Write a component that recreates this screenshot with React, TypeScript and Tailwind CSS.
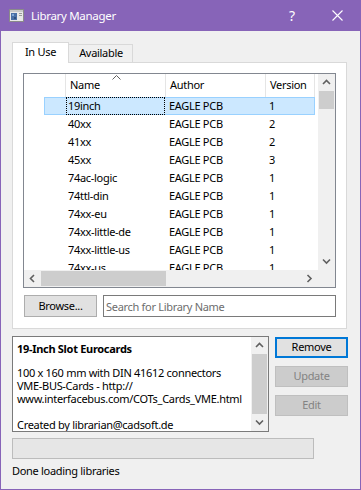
import { useState } from "react";

interface LibraryRow {
  name: string;
  author: string;
  version: string;
}

const rows: LibraryRow[] = [
  { name: "19inch", author: "EAGLE PCB", version: "1" },
  { name: "40xx", author: "EAGLE PCB", version: "2" },
  { name: "41xx", author: "EAGLE PCB", version: "2" },
  { name: "45xx", author: "EAGLE PCB", version: "3" },
  { name: "74ac-logic", author: "EAGLE PCB", version: "1" },
  { name: "74ttl-din", author: "EAGLE PCB", version: "1" },
  { name: "74xx-eu", author: "EAGLE PCB", version: "1" },
  { name: "74xx-little-de", author: "EAGLE PCB", version: "1" },
  { name: "74xx-little-us", author: "EAGLE PCB", version: "1" },
  { name: "74xx-us", author: "EAGLE PCB", version: "1" },
];

function Chevron({ dir }: { dir: "up" | "down" | "left" | "right" }) {
  const d = {
    up: "M1 5 L4.5 1.5 L8 5",
    down: "M1 1.5 L4.5 5 L8 1.5",
    left: "M5 1 L1.5 4.5 L5 8",
    right: "M1.5 1 L5 4.5 L1.5 8",
  }[dir];
  const horiz = dir === "up" || dir === "down";
  return (
    <svg width={horiz ? 9 : 7} height={horiz ? 7 : 9} viewBox={horiz ? "0 0 9 7" : "0 0 7 9"}>
      <path d={d} fill="none" stroke="#606060" strokeWidth="1.6" />
    </svg>
  );
}

function AppIcon() {
  return (
    <svg width="15" height="13" viewBox="0 0 15 13">
      <rect x="0.5" y="0.5" width="14" height="12" fill="#e8e8e8" stroke="#8a8a8a" />
      <rect x="1" y="1" width="13" height="2" fill="#c8c8c8" />
      <rect x="2" y="4" width="6" height="7" fill="#4a6fa5" />
      <rect x="3" y="5" width="2" height="2" fill="#7fa6d6" />
      <rect x="5" y="8" width="2" height="2" fill="#2f4f7f" />
      <rect x="10" y="4" width="3" height="1" fill="#9a9a9a" />
      <rect x="10" y="6" width="3" height="1" fill="#9a9a9a" />
    </svg>
  );
}

export default function App() {
  const [tab, setTab] = useState<"inuse" | "available">("inuse");
  const [selected, setSelected] = useState(0);

  return (
    <div className="w-[361px] h-[490px] bg-[#f0f0f0] border-x border-b border-[#8764b8] flex flex-col font-['Noto_Sans',sans-serif] text-[11px] tracking-[-0.3px] text-black overflow-hidden">
      {/* title bar */}
      <div className="h-[31px] bg-[#8764b8] flex items-center text-white shrink-0">
        <div className="ml-[8px] flex items-center">
          <AppIcon />
        </div>
        <span className="ml-[7px] text-[11.5px]">Library Manager</span>
        <div className="ml-auto flex h-full">
          <div className="w-[46px] h-full flex items-center justify-center text-[14px]">?</div>
          <div className="w-[45px] h-full flex items-center justify-center">
            <svg width="11" height="11" viewBox="0 0 11 11">
              <path d="M0.5 0.5 L10.5 10.5 M10.5 0.5 L0.5 10.5" stroke="white" strokeWidth="1.1" />
            </svg>
          </div>
        </div>
      </div>

      <div className="pl-[11px] pt-[11px] flex flex-col">
        {/* tabs */}
        <div className="flex items-end h-[20px]">
          <button
            onClick={() => setTab("inuse")}
            className="relative z-10 -mb-px h-[21px] w-[57px] bg-white border-x border-t border-[#d9d9d9] flex items-center justify-center pb-px"
          >
            In Use
          </button>
          <button
            onClick={() => setTab("available")}
            className="h-[18px] w-[64px] border-t border-r border-[#d9d9d9] bg-[#f0f0f0] flex items-center justify-center pl-[1px]"
          >
            Available
          </button>
        </div>

        {/* tab pane */}
        <div className="w-[335px] h-[267px] bg-white border border-[#d9d9d9] p-[10px] flex flex-col">
          {tab === "inuse" && (
            <>
              <div className="w-[313px] h-[215px] border border-[#828790] flex flex-col">
                <div className="flex flex-1 min-h-0">
                  <div className="w-[294px] flex flex-col overflow-hidden">
                    <div className="flex h-[23px] shrink-0 relative">
                      <div className="w-[42px] border-r border-[#e5e5e5]" />
                      <div className="w-[100px] border-r border-[#e5e5e5] flex items-center pl-[4px] relative">
                        Name
                        <div className="absolute left-[46px] top-[1px]">
                          <svg width="9" height="5" viewBox="0 0 9 5">
                            <path d="M0.5 4.5 L4.5 0.5 L8.5 4.5" fill="none" stroke="#606060" strokeWidth="1" />
                          </svg>
                        </div>
                      </div>
                      <div className="w-[100px] border-r border-[#e5e5e5] flex items-center pl-[4px]">Author</div>
                      <div className="w-[49px] border-r border-[#e5e5e5] flex items-center pl-[4px]">Version</div>
                      <div className="flex-1" />
                    </div>
                    {rows.map((r, i) => {
                      const sel = i === selected;
                      return (
                        <div
                          key={r.name}
                          onClick={() => setSelected(i)}
                          className={`ml-[20px] w-[271px] h-[18px] shrink-0 flex items-stretch border ${
                            sel ? "bg-[#cce8ff] border-[#99d1ff]" : "border-transparent"
                          }`}
                        >
                          <div className="w-[21px]" />
                          <div
                            className={`w-[99px] flex items-center pl-[1px] border ${
                              sel ? "border-dotted border-black" : "border-transparent"
                            } -my-px`}
                          >
                            {r.name}
                          </div>
                          <div className="w-[100px] flex items-center pl-[4px]">{r.author}</div>
                          <div className="flex-1 flex items-center pl-[4px]">{r.version}</div>
                        </div>
                      );
                    })}
                  </div>
                  {/* vertical scrollbar */}
                  <div className="w-[17px] bg-[#f0f0f0] flex flex-col items-center">
                    <div className="h-[17px] w-full flex items-center justify-center">
                      <Chevron dir="up" />
                    </div>
                    <div className="w-[15px] h-[18px] bg-[#cdcdcd]" />
                    <div className="flex-1" />
                    <div className="h-[17px] w-full flex items-center justify-center">
                      <Chevron dir="down" />
                    </div>
                  </div>
                </div>
                {/* horizontal scrollbar */}
                <div className="h-[17px] flex shrink-0 bg-[#f0f0f0]">
                  <div className="w-[17px] flex items-center justify-center">
                    <Chevron dir="left" />
                  </div>
                  <div className="w-[125px] h-[15px] my-px bg-[#cdcdcd]" />
                  <div className="flex-1" />
                  <div className="w-[17px] flex items-center justify-center">
                    <Chevron dir="right" />
                  </div>
                  <div className="w-[17px] bg-[#f0f0f0]" />
                </div>
              </div>

              <div className="mt-[7px] flex h-[22px]">
                <button className="ml-px w-[73px] h-[22px] bg-[#e1e1e1] border border-[#adadad] flex items-center justify-center">
                  Browse...
                </button>
                <input
                  className="ml-[6px] w-[233px] h-[22px] border border-[#7a7a7a] px-[2px] outline-none placeholder:text-[#6d6d6d] bg-white"
                  placeholder="Search for Library Name"
                />
              </div>
            </>
          )}
        </div>

        {/* description + buttons */}
        <div className="mt-[7px] flex">
          <div className="w-[257px] h-[96px] bg-white border border-[#7a7a7a] flex">
            <div className="flex-1 min-w-0 overflow-hidden whitespace-nowrap pl-[4px] pt-[4px] leading-[13px]">
              <div className="font-bold leading-[15px]">19-Inch Slot Eurocards</div>
              <div className="mt-[10px]">100 x 160 mm with DIN 41612 connectors</div>
              <div>VME-BUS-Cards - http://</div>
              <div>www.interfacebus.com/COTs_Cards_VME.html</div>
              <div className="h-[13px]" />
              <div>Created by librarian@cadsoft.de</div>
            </div>
            <div className="w-[17px] shrink-0 bg-[#f0f0f0] flex flex-col items-center">
              <div className="h-[17px] w-full flex items-center justify-center">
                <Chevron dir="up" />
              </div>
              <div className="w-[15px] flex-1 bg-[#cdcdcd]" />
              <div className="h-[17px] w-full flex items-center justify-center">
                <Chevron dir="down" />
              </div>
            </div>
          </div>
          <div className="ml-[6px] w-[73px] flex flex-col gap-[8px] mt-px">
            <button className="h-[21px] bg-[#e1e1e1] border-2 border-[#0078d7] flex items-center justify-center">
              Remove
            </button>
            <button disabled className="h-[21px] bg-[#cccccc] border border-[#bfbfbf] text-[#838383] flex items-center justify-center">
              Update
            </button>
            <button disabled className="h-[21px] bg-[#cccccc] border border-[#bfbfbf] text-[#838383] flex items-center justify-center">
              Edit
            </button>
          </div>
        </div>

        {/* progress */}
        <div className="mt-[6px] w-[302px] h-[21px] bg-[#e6e6e6] border border-[#bcbcbc]" />

        <div className="mt-[4px] leading-[16px]">Done loading libraries</div>
      </div>
    </div>
  );
}
